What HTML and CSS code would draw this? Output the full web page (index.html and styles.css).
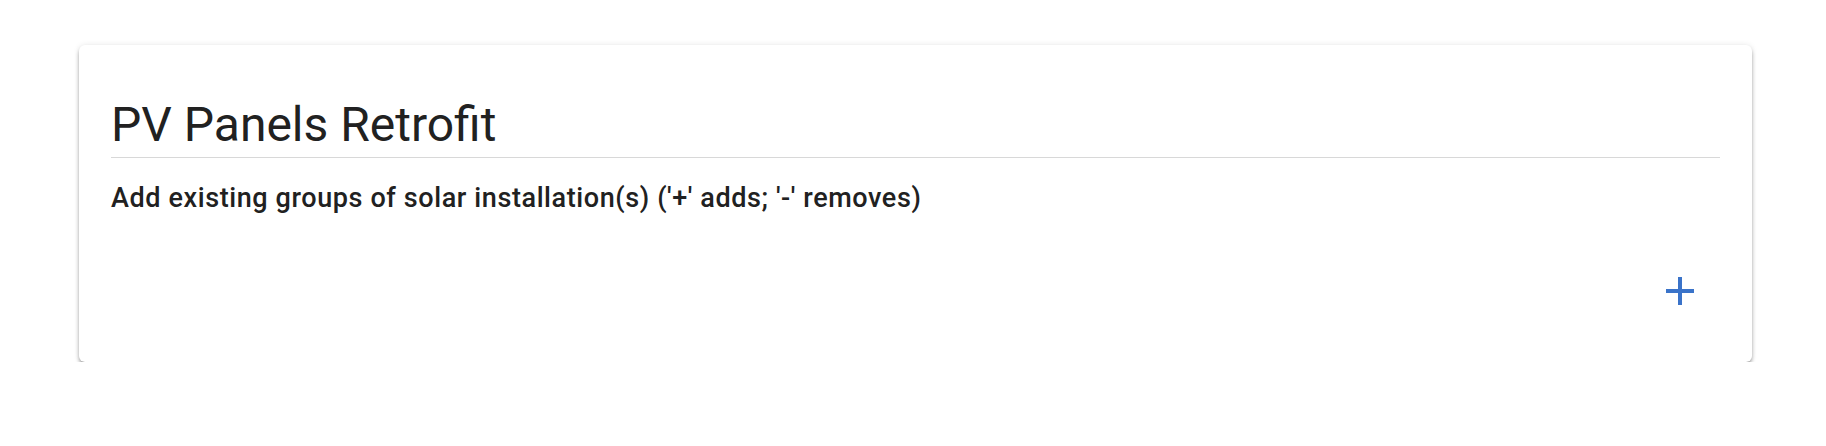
FILE: index.html
```html
<!DOCTYPE html>
<html>
<head>
<meta charset="utf-8">
<link rel="stylesheet" href="styles.css">
</head>
<body>
<div class="page">
  <section class="card">
    <h1 class="title">PV Panels Retrofit</h1>
    <p class="subtitle">Add existing groups of solar installation(s) ('+' adds; '-' removes)</p>
    <div class="actions">
      <button class="add-btn" aria-label="Add">
        <svg viewBox="0 0 24 24" width="48" height="48"><path d="M19 13h-6v6h-2v-6H5v-2h6V5h2v6h6v2z" fill="currentColor"/></svg>
      </button>
    </div>
  </section>
</div>
</body>
</html>
```
FILE: styles.css
```css
html, body {
  margin: 0;
  padding: 0;
  background: #ffffff;
}
body {
  font-family: Roboto, "Liberation Sans", sans-serif;
  color: #212121;
}
.page {
  padding: 45px 74px 0 79px;
}
.card {
  background: #fff;
  border-radius: 6px;
  box-shadow: 0 3px 4px -1px rgba(0,0,0,0.5), 0 0 6px rgba(0,0,0,0.09);
  padding: 0 32px;
  height: 317px;
  box-sizing: border-box;
  display: flex;
  flex-direction: column;
}
.title {
  margin: 0;
  padding-top: 52px;
  font-size: 48px;
  font-weight: 400;
  line-height: 56px;
  color: #212121;
  border-bottom: 1px solid #d8d8d8;
  padding-bottom: 4px;
}
.subtitle {
  margin: 0;
  padding-top: 24px;
  font-size: 27px;
  font-weight: 500;
  letter-spacing: 0.6px;
  line-height: 32px;
  color: #212121;
}
.actions {
  display: flex;
  justify-content: flex-end;
  padding-top: 53px;
  padding-right: 16px;
}
.add-btn {
  border: 0;
  background: transparent;
  padding: 0;
  width: 48px;
  height: 48px;
  color: #3a73c9;
  display: flex;
}
```
